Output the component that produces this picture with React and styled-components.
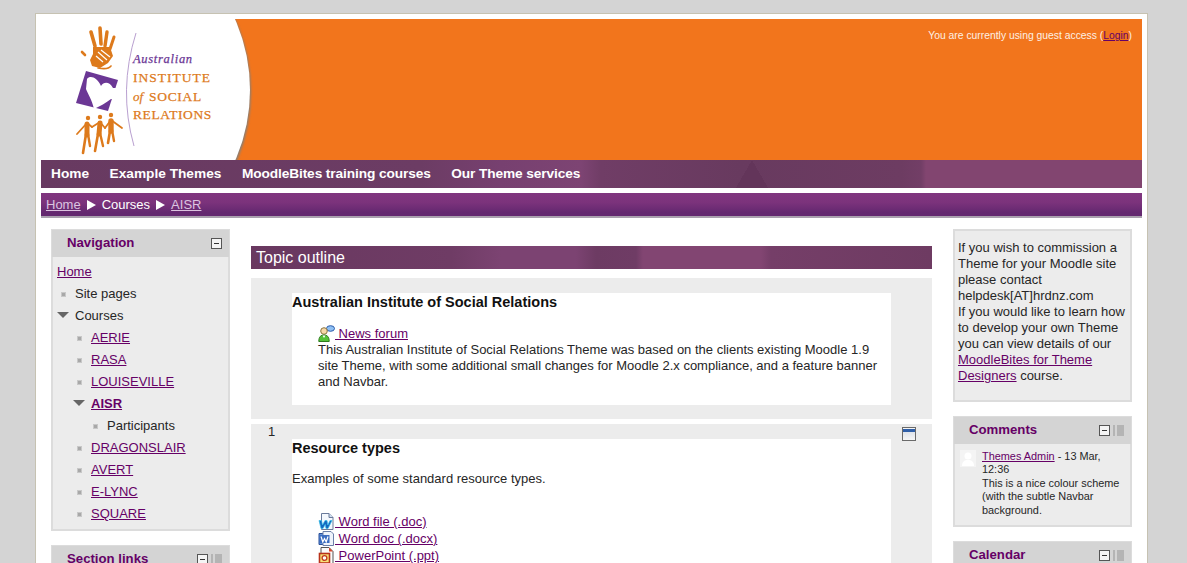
import React from 'react'
import styled, { createGlobalStyle } from 'styled-components'

const GlobalStyle = createGlobalStyle`
    html, body {
        margin: 0;
        height: 563px;
        overflow: hidden;
        background: #d4d4d4;
    }
    body {
        font-family: "Liberation Sans", Arial, sans-serif;
        font-size: 13px;
        line-height: 16px;
        color: #262626;
    }
    a {
        color: #660066;
        text-decoration: underline;
    }
`

const Page = styled.div`
    width: 1101px;
    margin: 13px 0 0 35px;
    padding: 5px;
    background: #fff;
    border: 1px solid #c6c2b2;
`

const Banner = styled.header`
    height: 141px;
    display: flex;
    justify-content: space-between;
    background: #f2751c;
`

const Logo = styled.svg`
    width: 215px;
    height: 141px;
    flex: none;
`

const LoginInfo = styled.div`
    padding: 10px 10px 0 0;
    font-size: 10.35px;
    line-height: 13px;
    color: #fdf0e4;
`

// the banner image is a soft texture of big plum hearts, read off the reference
const MainNav = styled.nav`
    height: 28px;
    box-sizing: border-box;
    padding: 0 0 1px 10px;
    display: flex;
    align-items: center;
    gap: 20.5px;
    background:
        conic-gradient(from 150deg at 711px 0, #63355a 0 60deg, transparent 60deg),
        linear-gradient(90deg,
            #683a61 0, #6c3c64 380px, #774070 460px, #7d4473 540px, #703d66 560px,
            #683a5f 700px, #6d3c62 860px, #723e66 880px, #824570 885px, #824570 1101px);
`

const NavItem = styled.a`
    color: #fff;
    font-size: 13.7px;
    font-weight: bold;
    text-decoration: none;
    letter-spacing: ${props => props.$tracking || 0}px;
`

const Navbar = styled.div`
    height: 22px;
    margin-top: 5px;
    padding: 1px 0 0 5px;
    display: flex;
    align-items: center;
    gap: 5px;
    color: #fff;
    background: linear-gradient(#80357f 0%, #7c337c 40%, #642870 85%, #642870 100%);
    border-bottom: 2px solid #a9a0ae;
`

const Crumb = styled.a`
    color: #dcc4e0;
`

const Separator = styled.span`
    width: 0;
    height: 0;
    margin: 0 1px;
    border-left: 9px solid #fff;
    border-top: 5px solid transparent;
    border-bottom: 5px solid transparent;
`

const Columns = styled.div`
    display: grid;
    grid-template-columns: 179px 681px 179px;
    gap: 21px;
    padding: 11px 10px 0;
    align-items: start;
`

const Column = styled.div`
    display: flex;
    flex-direction: column;
    gap: 14px;
`

const Block = styled.section`
    border: 2px solid #dcdcdc;
    background: #ececec;
`

const BlockHeader = styled.div`
    height: 27px;
    box-sizing: border-box;
    margin: -1px -1px 0;
    padding: 0 7px 0 15px;
    display: flex;
    align-items: center;
    justify-content: space-between;
    background: #d4d4d4;
`

const BlockTitle = styled.h2`
    margin: -2px 0 0;
    font-size: 13.2px;
    line-height: 24px;
    font-weight: bold;
    color: #660066;
`

const BlockControls = styled.div`
    display: flex;
    align-items: center;
    gap: 3px;
`

const Collapse = styled.span`
    width: 9px;
    height: 9px;
    border: 1px solid #555;
    background: #f4f4f4;
    display: flex;
    align-items: center;
    justify-content: center;
    &::after {
        content: '';
        width: 5px;
        height: 1px;
        background: #333;
    }
`

const Dock = styled.span`
    width: 11px;
    height: 11px;
    background: linear-gradient(90deg, #b4b4b4 0 2px, transparent 2px 4px, #b4b4b4 4px);
`

const Tree = styled.ul`
    list-style: none;
    margin: 0;
    padding: 4px 4px 4px;
`

const TreeRow = styled.li`
    height: 22px;
    line-height: 22px;
    display: flex;
    align-items: center;
    padding-left: ${props => props.$depth * 16}px;
    font-weight: ${props => (props.$bold ? 'bold' : 'normal')};
`

const Bullet = styled.span`
    flex: none;
    width: 3px;
    height: 3px;
    margin: 1px 9px 0 4px;
    background: #a8a8a8;
    border: 1px solid #c8c8c8;
`

const Arrow = styled.span`
    flex: none;
    width: 0;
    height: 0;
    margin: -2px 6px 0 0;
    border-top: 6px solid #666;
    border-left: 6px solid transparent;
    border-right: 6px solid transparent;
`

const MainTitle = styled.h2`
    margin: 17px 0 9px;
    height: 23px;
    padding-left: 5px;
    font-size: 16px;
    line-height: 23px;
    font-weight: normal;
    color: #fff;
    background:
        linear-gradient(90deg,
            #693860 0, #6f3c65 200px, #7c4372 250px, #7c4372 325px, #6d3b63 345px,
            #6f3c65 385px, #824572 392px, #824572 510px, #753e68 520px, #6e3b62 680px);
`

const Sections = styled.div`
    display: flex;
    flex-direction: column;
    gap: 5px;
`

const Section = styled.div`
    position: relative;
    padding: 15px 41px 14px;
    background: #ececec;
`

const SectionNumber = styled.span`
    position: absolute;
    left: 17px;
    top: 0;
`

const SectionContent = styled.div`
    background: #fff;
    min-height: 112px;
`

const SectionTitle = styled.h3`
    margin: 0 0 14px;
    font-size: 14.5px;
    line-height: 18px;
    font-weight: bold;
    color: #111;
`

const Summary = styled.p`
    margin: 0 0 26px;
`

const Activities = styled.div`
    padding: 0 10px 0 26px;
`

const Activity = styled.div`
    height: 17px;
    line-height: 17px;
    display: flex;
    align-items: center;
`

const ActivityLink = styled.a`
    display: inline-flex;
    align-items: center;
    white-space: pre;
`

const Note = styled.p`
    margin: 0;
`

const EditIcon = styled.span`
    position: absolute;
    right: 16px;
    top: 3px;
    width: 12px;
    height: 12px;
    border: 1px solid #6a6a6a;
    background: linear-gradient(#f4f4f4 0 1px, #2f5fa8 1px 4px, #dfe3ea 4px, #f6f6f6 100%);
`

const HtmlBlockBody = styled.div`
    padding: 9px 3px 16px 3px;
`

const Comment = styled.div`
    display: flex;
    gap: 6px;
    padding: 6px 6px 8px 5px;
    font-size: 10.9px;
    line-height: 13.4px;
`

const Avatar = styled.svg`
    flex: none;
    width: 16px;
    height: 17px;
`

function Chrome() {
    return (
        <BlockControls>
            <Collapse />
            <Dock />
        </BlockControls>
    )
}

function LogoArt() {
    const orange = '#dd7a1c'
    return (
        <Logo viewBox="41 19 215 141">
            <defs>
                <filter id="edge"><feGaussianBlur stdDeviation="1" /></filter>
            </defs>
            <circle cx="76" cy="92" r="175" fill="#857f78" filter="url(#edge)" />
            <circle cx="75" cy="90" r="175" fill="#fff" />
            <g stroke={orange} strokeLinecap="round" fill="none">
                <path d="M91 32 L95 46" strokeWidth="3.6" />
                <path d="M100 28 L101 44" strokeWidth="3.6" />
                <path d="M107 32 L105 46" strokeWidth="3.4" />
                <path d="M114 37 L110 49" strokeWidth="3" />
                <path d="M82 52 L85 55" strokeWidth="2.6" />
                <path d="M98 68 Q108 70 111 66" strokeWidth="1.6" />
            </g>
            <path d="M93 47 L110 47 L113 56 L108 63 L100 68 L92 66 L90 60 L93 54 Z" fill={orange} />
            <g stroke="#fff" strokeWidth="1.2" fill="none">
                <path d="M98 52 L107 60" />
                <path d="M101 50 L110 57" />
                <path d="M96 56 L103 62" />
            </g>
            <path d="M86 71 L118 80 L108 111 L76 103 Z" fill="#6b3795" />
            <path d="M87 79 C90 75 97 77 101 86 C104 81 110 82 113 88 L117 88 L113 99 L111 99 C106 103 100 106 94 109 C92 100 88 94 86 89 Z" fill="#fff" />
            <g stroke={orange} strokeLinecap="round" strokeLinejoin="round" fill="none">
                <circle cx="88" cy="118" r="2.2" fill={orange} stroke="none" />
                <circle cx="100" cy="117" r="2.2" fill={orange} stroke="none" />
                <circle cx="111" cy="115" r="2.2" fill={orange} stroke="none" />
                <path d="M77 134 L87 123 L92 127" strokeWidth="1.8" />
                <path d="M87 124 L87 135" strokeWidth="5" />
                <path d="M86 134 L83 153" strokeWidth="2.6" />
                <path d="M88 134 L90 146" strokeWidth="2.4" />
                <path d="M92 127 L100 122 L105 128" strokeWidth="1.8" />
                <path d="M100 123 L99 134" strokeWidth="5" />
                <path d="M98 134 L95 151" strokeWidth="2.6" />
                <path d="M100 133 L103 146" strokeWidth="2.4" />
                <path d="M105 128 L111 120 L122 128" strokeWidth="1.8" />
                <path d="M111 121 L111 131" strokeWidth="5.4" />
                <path d="M110 131 L108 143" strokeWidth="2.6" />
                <path d="M112 130 L114 141" strokeWidth="2.4" />
            </g>
            <path d="M136 33 Q118 90 134 146" stroke="#b9a0d0" strokeWidth="1" fill="none" />
            <g fontFamily="'Liberation Serif', serif" stroke={orange} strokeWidth="0.25" fill={orange}>
                <text x="133" y="63" fontSize="12.5" fontStyle="italic" fill="#6b3795" stroke="#6b3795" letterSpacing="0.7">Australian</text>
                <text x="133" y="81.5" fontSize="13.5" letterSpacing="1">INSTITUTE</text>
                <text x="133" y="100.5" fontSize="13" fontStyle="italic">of</text>
                <text x="149" y="100.5" fontSize="13.5" letterSpacing="0.7">SOCIAL</text>
                <text x="133" y="118.5" fontSize="13.5" letterSpacing="0.6">RELATIONS</text>
            </g>
        </Logo>
    )
}

function ForumIcon() {
    return (
        <svg width="17" height="17" viewBox="0 0 17 17">
            <ellipse cx="12.5" cy="3.5" rx="4" ry="2.8" fill="#8fc0f4" stroke="#2a5aa8" />
            <circle cx="6" cy="6" r="3.3" fill="#f6d8a8" stroke="#8a7440" />
            <path d="M.8 16.5 C.8 11.5 3 10 6 10 C9 10 11.2 11.5 11.2 16.5 Z" fill="#55c238" stroke="#2c7a1c" />
            <path d="M4.5 10.5 L6 13 L7.5 10.5 Z" fill="#fff" />
        </svg>
    )
}

function WordIcon() {
    return (
        <svg width="17" height="17" viewBox="0 0 17 17">
            <path d="M3.5 .5 H11 L15 4.5 V16.5 H3.5 Z" fill="#f4f8fd" stroke="#6a7a9a" />
            <path d="M11 .5 V4.5 H15" fill="#cfdff2" stroke="#6a7a9a" />
            <path d="M1 7.5 H3.5 L4.5 12 L7 7.5 H9 L9.8 12 L12 7.5 H14 L10 15.5 H8 L7.2 11.5 L5 15.5 H3 Z" fill="#1468c0" stroke="#35c0ea" strokeWidth=".7" />
        </svg>
    )
}

function DocxIcon() {
    return (
        <svg width="17" height="17" viewBox="0 0 17 17">
            <path d="M1 3.5 H7 V14.5 H1 Z" fill="#5f8fd8" stroke="#2a4f96" />
            <path d="M5 1.5 H13 L15.5 4 V15.5 H5 Z" fill="#eef3fb" stroke="#6a7fa8" />
            <rect x="1.5" y="5" width="10" height="8" fill="#3a6cc0" />
            <path d="M3 6.5 L4.8 12 L6.5 8.5 L8.2 12 L10 6.5" stroke="#fff" strokeWidth="1.2" fill="none" />
        </svg>
    )
}

function PptIcon() {
    return (
        <svg width="17" height="17" viewBox="0 0 17 17">
            <path d="M3 .5 H11 L15 4.5 V16.5 H3 Z" fill="#fbfbfb" stroke="#555" />
            <path d="M11 .5 L15 4.5 L11 4.5 Z" fill="#d8432a" />
            <rect x="1.5" y="6.5" width="10" height="9.5" fill="#f7e27a" stroke="#b8321a" strokeWidth="1.6" />
            <circle cx="6.5" cy="11" r="2.4" fill="#fff" stroke="#c03a1c" strokeWidth="1.3" />
        </svg>
    )
}

const courses = [
    { name: 'AERIE' },
    { name: 'RASA' },
    { name: 'LOUISEVILLE' },
    { name: 'AISR', open: true },
    { name: 'DRAGONSLAIR' },
    { name: 'AVERT' },
    { name: 'E-LYNC' },
    { name: 'SQUARE' },
]

function NavigationBlock() {
    return (
        <Block>
            <BlockHeader>
                <BlockTitle>Navigation</BlockTitle>
                <BlockControls><Collapse /></BlockControls>
            </BlockHeader>
            <Tree>
                <TreeRow $depth={0}><a href="#">Home</a></TreeRow>
                <TreeRow $depth={0}><Bullet />Site pages</TreeRow>
                <TreeRow $depth={0}><Arrow />Courses</TreeRow>
                {courses.map(course => (
                    <React.Fragment key={course.name}>
                        <TreeRow $depth={1} $bold={course.open}>
                            {course.open ? <Arrow /> : <Bullet />}
                            <a href="#">{course.name}</a>
                        </TreeRow>
                        {course.open && (
                            <TreeRow $depth={2}><Bullet />Participants</TreeRow>
                        )}
                    </React.Fragment>
                ))}
            </Tree>
        </Block>
    )
}

export default function App() {
    return (
        <>
            <GlobalStyle />
            <Page>
                <Banner>
                    <LogoArt />
                    <LoginInfo>You are currently using guest access (<a href="#">Login</a>)</LoginInfo>
                </Banner>
                <MainNav>
                    <NavItem href="#">Home</NavItem>
                    <NavItem href="#">Example Themes</NavItem>
                    <NavItem href="#" $tracking={-0.1}>MoodleBites training courses</NavItem>
                    <NavItem href="#" $tracking={-0.1}>Our Theme services</NavItem>
                </MainNav>
                <Navbar>
                    <Crumb href="#">Home</Crumb>
                    <Separator />
                    <span>Courses</span>
                    <Separator />
                    <Crumb href="#">AISR</Crumb>
                </Navbar>
                <Columns>
                    <Column>
                        <NavigationBlock />
                        <Block>
                            <BlockHeader>
                                <BlockTitle>Section links</BlockTitle>
                                <Chrome />
                            </BlockHeader>
                        </Block>
                    </Column>
                    <div>
                        <MainTitle>Topic outline</MainTitle>
                        <Sections>
                            <Section>
                                <SectionContent>
                                    <SectionTitle>Australian Institute of Social Relations</SectionTitle>
                                    <Activities>
                                        <Activity><ActivityLink href="#"><ForumIcon /> News forum</ActivityLink></Activity>
                                        <Note>This Australian Institute of Social Relations Theme was based on the clients existing Moodle 1.9 site Theme, with some additional small changes for Moodle 2.x compliance, and a feature banner and Navbar.</Note>
                                    </Activities>
                                </SectionContent>
                            </Section>
                            <Section>
                                <SectionNumber>1</SectionNumber>
                                <EditIcon />
                                <SectionContent>
                                    <SectionTitle>Resource types</SectionTitle>
                                    <Summary>Examples of some standard resource types.</Summary>
                                    <Activities>
                                        <Activity><ActivityLink href="#"><WordIcon /> Word file (.doc)</ActivityLink></Activity>
                                        <Activity><ActivityLink href="#"><DocxIcon /> Word doc (.docx)</ActivityLink></Activity>
                                        <Activity><ActivityLink href="#"><PptIcon /> PowerPoint (.ppt)</ActivityLink></Activity>
                                    </Activities>
                                </SectionContent>
                            </Section>
                        </Sections>
                    </div>
                    <Column>
                        <Block>
                            <HtmlBlockBody>
                                If you wish to commission a Theme for your Moodle site please contact helpdesk[AT]hrdnz.com<br />
                                If you would like to learn how to develop your own Theme you can view details of our <a href="#">MoodleBites for Theme Designers</a> course.
                            </HtmlBlockBody>
                        </Block>
                        <Block>
                            <BlockHeader>
                                <BlockTitle>Comments</BlockTitle>
                                <Chrome />
                            </BlockHeader>
                            <Comment>
                                <Avatar viewBox="0 0 16 17">
                                    <rect width="16" height="17" fill="#f4f4f4" />
                                    <circle cx="8" cy="6" r="3.5" fill="#fff" />
                                    <path d="M2 16 C2 11 5 10 8 10 C11 10 14 11 14 16 Z" fill="#fff" />
                                </Avatar>
                                <div>
                                    <a href="#">Themes Admin</a> - 13 Mar, 12:36<br />
                                    This is a nice colour scheme (with the subtle Navbar background.
                                </div>
                            </Comment>
                        </Block>
                        <Block>
                            <BlockHeader>
                                <BlockTitle>Calendar</BlockTitle>
                                <Chrome />
                            </BlockHeader>
                        </Block>
                    </Column>
                </Columns>
            </Page>
        </>
    )
}
